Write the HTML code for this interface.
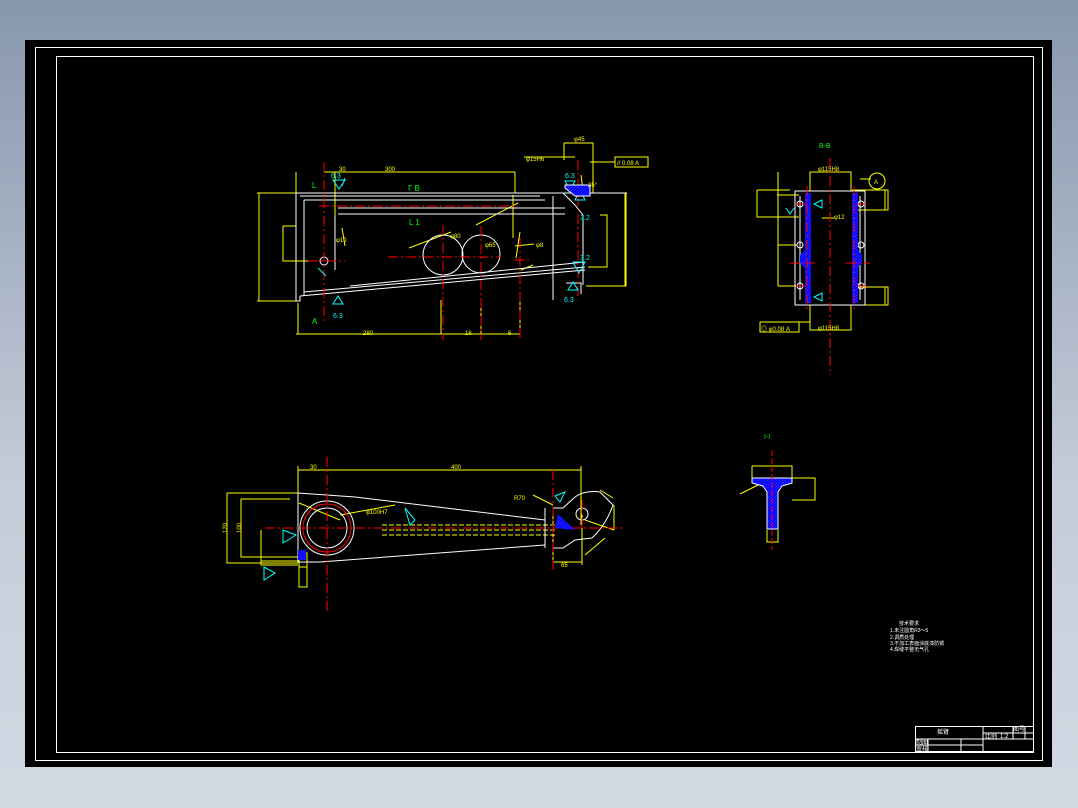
<!DOCTYPE html>
<html><head><meta charset="utf-8"><style>
html,body{margin:0;padding:0;width:1078px;height:808px;overflow:hidden;background:linear-gradient(#8797ad,#c5ccd9 60%,#d3d9e3);}
svg{position:absolute;left:0;top:0}
text{font-family:"Liberation Sans","Noto Sans CJK SC",sans-serif;}
</style></head><body>
<svg width="1078" height="808" viewBox="0 0 1078 808" xmlns="http://www.w3.org/2000/svg">
<defs>
<pattern id="h" width="3" height="3" patternUnits="userSpaceOnUse"><rect width="3" height="3" fill="#0000ff"/><path d="M0 3L3 0" stroke="#4040ff" stroke-width="0.6"/></pattern>
</defs>
<rect x="25" y="40" width="1027" height="727" fill="#000"/>
<rect x="35.5" y="47.5" width="1007" height="713" fill="none" stroke="#fff" stroke-width="1"/>
<rect x="56.5" y="56.5" width="977" height="696" fill="none" stroke="#fff" stroke-width="1"/>

<!-- ===== TOP VIEW ===== -->
<g fill="none" stroke-width="1">
<g stroke="#ffff00">
<path d="M257 193H296M257 301H300M259 193V301"/>
<path d="M296 172V193M324 172H515M515 172V193M335 172V230M298 303V334H520V300M441 300V334M481 300V334M296 334H520"/>
<path d="M565 193H626V286H586M625 193V286M600 215H607V267H588M581 175L583 190"/>
<path d="M564 143H593V193M564 143V160M524 157H575M590 162H615M615 157H648V167H615Z"/>
<path d="M283 226V261H318M283 226H296M505 196H514M513 195V238M521 270L533 265"/>
<path d="M342 228L345 246M451 232L409 248M515 246L534 244M476 225L518 203M520 232L516 258"/>
</g>
<g stroke="#fff">
<path d="M296 193H627M296 193V301H300V296M300 196H540M304 200H545M553 196V300M304 200V296"/>
<path d="M338 208H565M338 214H565M335 215V270"/>
<path d="M300 296L585 270M304 292L585 267M350 286L585 262M566 283H581V294"/>
<path d="M563 193L575 205L583 215V285"/>
<circle cx="443" cy="255" r="20"/><circle cx="481" cy="254" r="19"/>
<circle cx="324" cy="261" r="4"/>
</g>
<g stroke="#ff0000" stroke-dasharray="10 3 2 3">
<path d="M319 206H518M324 162V322M443 225V340M481 226V340M520 238V340M578 160V300M308 261H345M388 257H500M514 260H530"/>
</g>
<g stroke="#00ffff">
<path d="M333 180H345L339 189ZM345 178L342 186M565 181H575L570 190ZM575 200L580 190L585 200ZM568 290L573 282L578 290ZM573 262H585L579 273ZM333 304L338 296L343 304ZM318 268L326 276"/>
</g>
<path d="M565 185H590V196H575L565 188Z" fill="url(#h)" stroke="#fff"/>
</g>
<g font-size="6" fill="#ffff00">
<text x="385" y="171">300</text><text x="339" y="171">30</text><text x="574" y="141">φ45</text>
<text x="526" y="161">φ15H6</text><text x="617" y="165">// 0.08 A</text>
<text x="363" y="335">280</text><text x="465" y="335">16</text><text x="508" y="335">6</text>
<text x="450" y="238">φ80</text><text x="485" y="247">φ65</text><text x="588" y="187">35°</text>
<text x="336" y="242">φ10</text><text x="536" y="247">φ8</text>
</g>
<g font-size="7" fill="#00ffff"><text x="331" y="178">6.3</text><text x="565" y="178">6.3</text><text x="580" y="220">3.2</text><text x="580" y="260">3.2</text><text x="333" y="318">6.3</text><text x="564" y="302">6.3</text></g>
<g font-size="8" fill="#00ff00"><text x="408" y="191">Γ B</text><text x="409" y="225">L 1</text><text x="312" y="188">L</text><text x="312" y="324">A</text></g>

<!-- ===== RIGHT SIDE VIEW ===== -->
<g fill="none">
<g stroke="#ffff00">
<path d="M810 172H851V191M810 172V191M810 305V330H851V305M760 322H810M760 322V332H799V322"/>
<path d="M757 190H790M757 190V217H799M778 172V286M777 195H799M778 245H797M778 286H799M852 210H888V190H852M852 287H888V305H852M885 190V210M885 287V305"/>
<path d="M860 179H871M822 218H834"/>
</g>
<circle cx="877" cy="181" r="8" stroke="#ffff00"/>
<g stroke="#fff">
<rect x="795" y="191" width="70" height="114"/>
<path d="M800 196V300M860 196V300"/>
<circle cx="800" cy="204" r="3"/><circle cx="800" cy="245" r="3"/><circle cx="800" cy="286" r="3"/>
<circle cx="861" cy="204" r="3"/><circle cx="861" cy="245" r="3"/><circle cx="861" cy="286" r="3"/>
</g>
<path d="M805 193H811V303H805V268L800 263V255L805 250Z" fill="url(#h)"/>
<path d="M852 193H858V250L862 255V263L858 268V303H852Z" fill="url(#h)"/>
<g stroke="#ff0000" stroke-dasharray="10 3 2 3"><path d="M830 158V375M807 186V312M854 186V312M790 263H815M846 263H870"/></g>
<g stroke="#ff0000"><path d="M796 204H805M857 204H866M796 286H805M857 286H866"/></g>
<g stroke="#00ffff"><path d="M822 200L814 204L822 208ZM822 293L814 297L822 301ZM786 208L790 214L794 208"/></g>
</g>
<g font-size="6" fill="#ffff00"><text x="818" y="171">φ115H8</text><text x="818" y="330">φ115H8</text><text x="834" y="219">φ12</text><text x="761" y="331">◎ φ0.08 A</text><text x="874" y="184" font-size="6">A</text></g>
<text x="819" y="148" font-size="7" fill="#00ff00">B-B</text>

<!-- ===== BOTTOM VIEW ===== -->
<g fill="none">
<g stroke="#ffff00">
<path d="M298 470H581M298 466V493M581 466V525"/>
<path d="M227 493H298M227 493V563H298M241 499H290M241 499V557H298M261 530V565H298M259 557H298M261 561H298"/>
<path d="M299 553H307V587H299Z M299 567H307"/>
<path d="M553 515V565M553 562H582M582 515V565M614 505V530M600 490L613 498M585 555L605 538M585 520L614 530"/>
<path d="M382 525H555M382 530H555M382 535H555" stroke-dasharray="5 2"/>
<path d="M340 515L395 505M299 503L340 520M533 495L553 505"/>
</g>
<g stroke="#fff">
<path d="M298 493L355 497L545 520M320 562L545 545M298 493V562H320"/>
<circle cx="327" cy="528" r="27"/><circle cx="327" cy="528" r="20"/>
<path d="M545 508V548M553 508H563L575 497Q585 490 600 492L613 505Q606 525 592 538L575 540L563 548H553"/>
<circle cx="582" cy="514" r="6"/>
</g>
<circle cx="327" cy="528" r="24" stroke="#ff0000"/>
<g stroke="#ff0000" stroke-dasharray="10 3 2 3"><path d="M327 457V612M553 470V570M265 528H625M582 500V528"/></g>
<path d="M558 514L575 530L555 528Z" fill="url(#h)"/>
<path d="M298 550H306V560H298Z" fill="url(#h)"/>
<g stroke="#00ffff"><path d="M405 508L415 520L410 525ZM283 530L296 535L283 543ZM264 567L275 573L264 580ZM555 496L565 492L560 502Z"/></g>
</g>
<g font-size="6" fill="#ffff00"><text x="310" y="469">30</text><text x="451" y="469">400</text><text x="227" y="533" transform="rotate(-90 227 533)">120</text><text x="241" y="533" transform="rotate(-90 241 533)">100</text><text x="561" y="567">65</text><text x="366" y="514">φ100H7</text><text x="514" y="500">R70</text></g>

<!-- ===== SECTION ===== -->
<g fill="none">
<path d="M752 466H792V478M752 466V478M792 478H815V500H792M770 517H778M767 530V542H778V530M740 494L760 484" stroke="#ffff00"/>
<path d="M752 478H792V483L782 486L778 492V529H767V492L763 486L752 483Z" fill="url(#h)" stroke="#fff"/>
<path d="M772 450V550" stroke="#ff0000" stroke-dasharray="6 2"/>
</g>
<text x="764" y="439" font-size="7" fill="#00ff00">I-I</text>

<!-- ===== NOTES ===== -->
<g font-size="5" fill="#fff"><text x="899" y="625">技术要求</text><text x="890" y="632">1.未注圆角R3～5</text><text x="890" y="639">2.调质处理</text><text x="890" y="645">3.不加工表面涂底漆防锈</text><text x="890" y="651">4.焊缝平整无气孔</text></g>

<!-- ===== TITLE BLOCK ===== -->
<g fill="none" stroke="#fff" stroke-width="1">
<rect x="915.5" y="726.5" width="118" height="25"/>
<path d="M915 739H1033M915 745H983M928 739V752M961 739V752M983 726V752M1013 726V739M1025 726V739M983 733H1033"/>
</g>
<g font-size="6" fill="#fff"><text x="937" y="734">摇臂</text><text x="916" y="744">制图</text><text x="916" y="751">审核</text><text x="985" y="738">比例</text><text x="1000" y="738">1:2</text><text x="1013" y="731">图号</text></g>
</svg>
</body></html>
